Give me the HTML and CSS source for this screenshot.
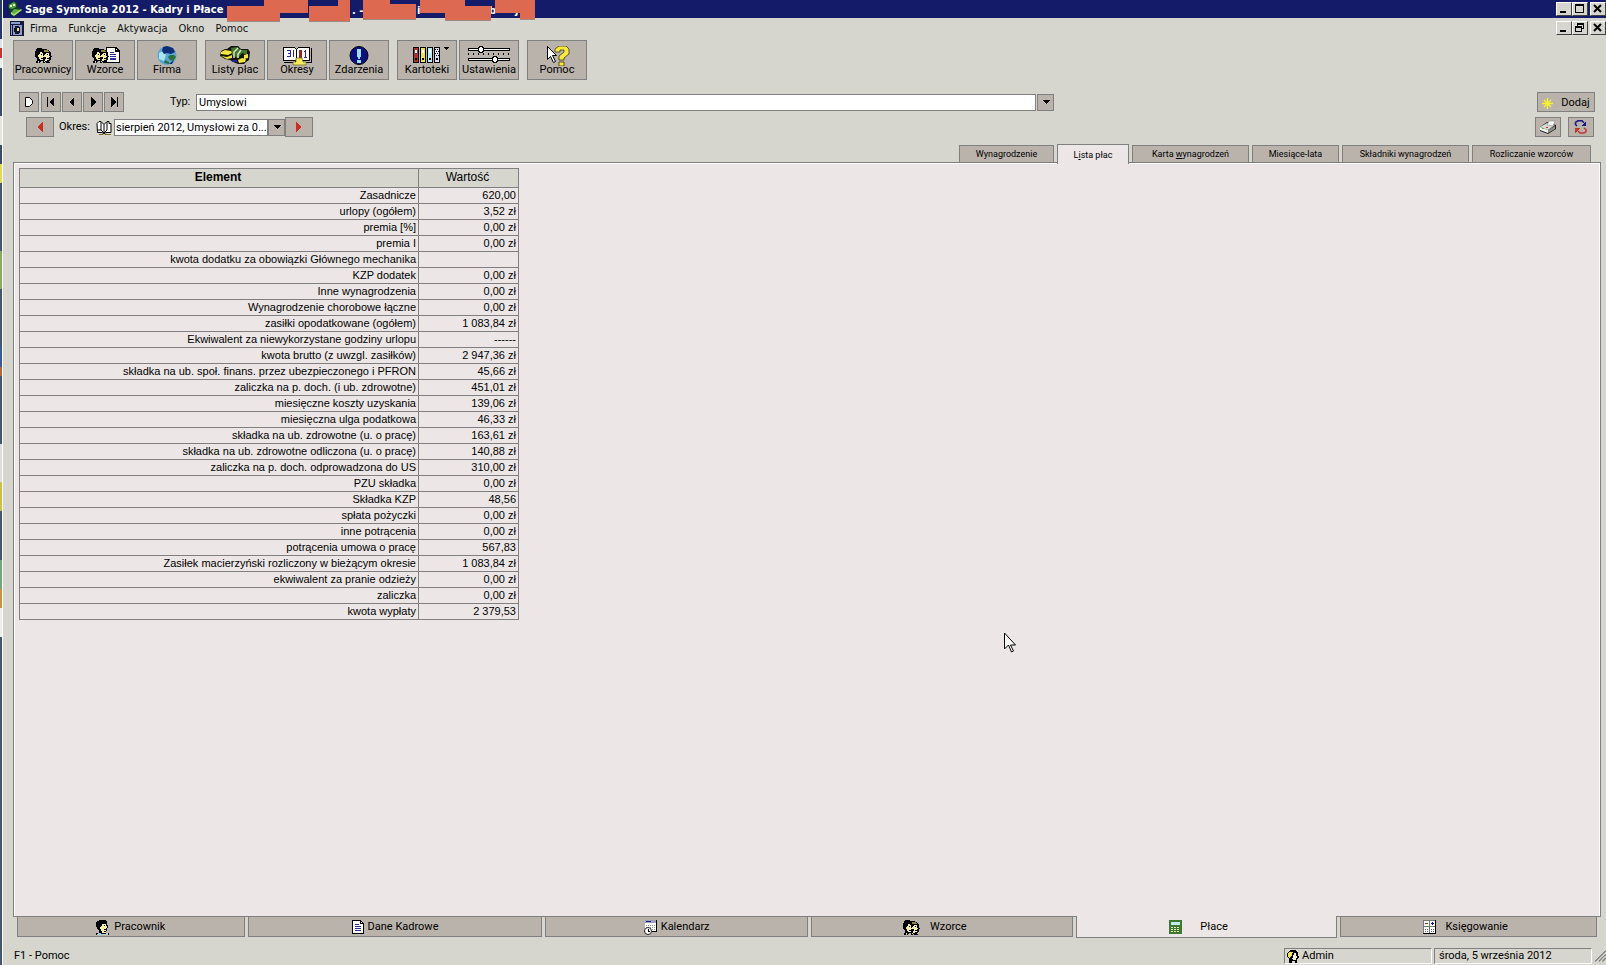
FILE: index.html
```html
<!DOCTYPE html>
<html lang="pl">
<head>
<meta charset="utf-8">
<title>Sage Symfonia 2012 - Kadry i Płace</title>
<link rel="stylesheet" href="styles.css">
</head>
<body>
<svg class="defs" aria-hidden="true">
  <symbol id="heads" viewBox="0 0 17 15">
    <path fill="#000" d="M2 0h5v1h5v1h2v1h1v1h1v4h1v1h-1v3h-1v1h-1v1h1v1h-4v-1h-1v1H8v-2H6v1H5v1H4v-1H3v1H1v-2h1v-3H1V9H0V3h1V1h1z"/>
    <path fill="#f3eda6" d="M5 4h2v1h1v3h1v1H8v3H5v-1H4V9H3V7h1V6h1zM11 5h3v3h1v1h-1v3h-2v1h-2v-2h1V9H9V7h1V6h1z"/>
    <path fill="#8d8338" d="M9 2h4v1h1v1H9z"/>
    <path fill="#000" d="M6 6h1v1H6zM12 6h1v1h-1zM6 10h2v1H6zM12 10h2v1h-2z"/>
    <path fill="#f3eda6" d="M3 13h1v1H3zM9 13h1v1H9z"/>
  </symbol>
  <symbol id="head" viewBox="0 0 14 15">
    <path fill="#000" d="M3 0h7v1h1v4h1v3h-1v3h-1v1H9v1h4v2H0v-2h3v-3H2V9H1V7H0V2h1V1h2z"/>
    <path fill="#f3eda0" d="M6 4h4v2h1v2h-1v3H8v1h2v1H6v-2H5V9H4V7h1V6h1z"/>
    <path fill="#000" d="M8 5h1v1H8zM8 9h2v1H8z"/><path fill="#9fd6d4" d="M2 13h3v1h5v-1h2v2H1v-1h1z"/>
  </symbol>
  <symbol id="page" viewBox="0 0 12 14">
    <path fill="#fff" stroke="#000" d="M.5.5h8l3 3v10H.5z"/><path fill="none" stroke="#000" d="M8.500.5v3h3"/>
    <path stroke="#2c2ca0" d="M3 4.500h4M3 6.500h6M3 8.500h6M3 10.500h6"/>
  </symbol>
</svg>
<div class="desktop">
<div class="backdrop"></div>
<div class="window">
  <header class="titlebar">
    <svg class="app-icon" viewBox="0 0 16 16"><path class="smooth" fill="#163f24" d="M1 3l6-3 3 2 1 4 4 3-8 7-4-3v-3L1 7z"/><path class="smooth" fill="#4ba545" d="M2 4l5-3 2 2v3L5 8 2 7z"/><path fill="#eef0c0" d="M3 4h2v2H3zM6 3h2v2H6z"/><path class="smooth" fill="#5fae46" d="M4 12l3-4 7 1-6 5z"/><path class="smooth" fill="#a5db70" d="M4 13l3 2 8-6-1-1-7 5-3-2z"/></svg>
    <h1>Sage Symfonia 2012 - Kadry i Płace</h1>
    <svg class="redaction" viewBox="0 0 312 24" aria-hidden="true">
      <text x="7" y="14">- TAW</text><text x="125" y="14">. -</text><text x="190" y="14">i</text><text x="262" y="14">b</text><text x="288" y="14">j</text>
      <path fill="#9c8a80" d="M0 21h53v1H0zM82 21h41v1H82zM136 19h53v1h-53zM218 20h46v1h-46zM293 19h15v1h-15z"/>
      <path fill="#dc6950" d="M0 6h37V0h44v13H53v8H0zM82 6h29V0h12v21H82zM136 0h27v4h26v15h-53zM193 0h45v6h26v14h-46v-7h-25zM268 0h40v19h-15v-6h-25z"/>
    </svg>
    <div class="controls">
      <button aria-label="Minimalizuj"><svg viewBox="0 0 12 10"><path stroke="#000" stroke-width="2" d="M2 8h6"/></svg></button><button aria-label="Maksymalizuj"><svg viewBox="0 0 12 10"><path fill="none" stroke="#000" d="M1.500.5h8v8h-8zM1 1.500h9"/></svg></button><button class="close" aria-label="Zamknij"><svg viewBox="0 0 12 10"><path class="smooth" fill="none" stroke="#000" stroke-width="2" d="M2 1l7 7M9 1L2 8"/></svg></button>
    </div>
  </header>
  <nav class="menubar">
    <svg class="doc-icon" viewBox="0 0 14 15"><path fill="#18183c" d="M0 0h14v15H0z"/><path fill="#8c9ccb" d="M1 1h9v2H1zM1 4h1v10H1z"/><path fill="#8c9ccb" d="M3 4h9v10H3z"/><path fill="#14142c" d="M5 5h4v1h1v6H9v1H5v-2H4V7h1z"/><path fill="#e9df80" d="M7 7h2v3H7z"/></svg>
    <a href="#">Firma</a><a href="#">Funkcje</a><a href="#">Aktywacja</a><a href="#">Okno</a><a href="#">Pomoc</a>
    <div class="controls">
      <button aria-label="Minimalizuj dokument"><svg viewBox="0 0 12 10"><path stroke="#000" stroke-width="2" d="M2 8h6"/></svg></button><button aria-label="Przywróć"><svg viewBox="0 0 12 10"><path fill="none" stroke="#000" d="M3.500 3V.5h6v5H8M3 1.500h7M1.500 3.500h6v5h-6zM1 4.500h7"/></svg></button><button class="close" aria-label="Zamknij dokument"><svg viewBox="0 0 12 10"><path class="smooth" fill="none" stroke="#000" stroke-width="2" d="M2 1l7 7M9 1L2 8"/></svg></button>
    </div>
  </nav>
  <div class="toolbar">
    <div class="group">
      <button><svg viewBox="0 0 44 20"><use href="#heads" x="14" y="2" width="17" height="15"/></svg>Pracownicy</button>
      <button><svg viewBox="0 0 44 20"><use href="#page" x="23" y="1" width="14" height="16"/><use href="#heads" x="9" y="2" width="17" height="15"/></svg>Wzorce</button>
      <button><svg viewBox="0 0 44 20"><circle class="smooth" cx="22" cy="9.500" r="9.500" fill="#5aa5d4"/><path class="smooth" fill="#a8e4ee" d="M14 7l4-2 3 4-2 6-5-2z"/><path class="smooth" fill="#102c74" d="M18 1l4-1 6 2 2 4-4 2-4-1-3 1-2-3zM24 18l5-4-2 4z"/><path class="smooth" fill="#28743c" d="M25 9l4 0 2 2-3 4-3-1-2-3zM20 14l4 2v2l-5-1z"/></svg>Firma</button>
    </div>
    <div class="group">
      <button><svg viewBox="0 0 44 20"><path class="smooth" fill="#141408" d="M14 3l4-3h7l3 3h7l2 3-1 8-3 2-2 2h-6l-5-2-3-2-5-1-5-3 1-5 4-2z"/><path class="smooth" fill="#3e762f" d="M18 2l6-1 4 3h6v5l-5-2-4 5-6-3z"/><path class="smooth" fill="none" stroke="#dde7ba" stroke-width="1.500" d="M25 2l-4 4v6M28 4l-3 4v4"/><path class="smooth" fill="#f4e640" d="M8 6l4-2 6 1 1 2-4 2-7-1zM8 10l6 1 5-2v3l-5 1zM25 14l4-2 4 1-1 3-6 1zM31 9l4-1v4l-4 1z"/><path fill="#182a85" d="M19 14h5v2h-5z"/></svg>Listy płac</button>
      <button><svg viewBox="0 0 44 20"><path fill="#fff" stroke="#000" d="M8.500 1.500h11l2 2 2-2h11v13h-11l-2 1-2-1h-11z"/><path stroke="#000" d="M21.500 3v12"/><path fill="none" stroke="#000" d="M36.500 2v14.500H24M9 16.500h11"/><path fill="none" stroke="#282898" d="M12 4.500h3.500v6H12M13 7.500h2M18.500 4v7M30.500 4v7M29 5.500h1M29 11h3"/><path fill="#922a20" d="M24 4h3v9h-3z"/><path class="smooth" fill="#f6e95a" stroke="#5d510f" stroke-width=".6" d="M21 12h6l1 4h3v3H18v-3h3z"/></svg>Okresy</button>
      <button><svg viewBox="0 0 44 20"><circle class="smooth" cx="22" cy="9.500" r="9" fill="#0a0f80" stroke="#000"/><path fill="#9cdcf4" d="M20 3h4v8h-1v2h-2v-2h-1zM20 14h4v3h-4z"/></svg>Zdarzenia</button>
    </div>
    <div class="group">
      <button><svg viewBox="0 0 44 20"><path d="M8 1h6v16H8zM15 1h6v16h-6zM22 1h6v16h-6zM29 1h6v16h-6zM39 1h5v1h-1v1h-1v1h-1V3h-1V2h-1z"/><path fill="#a8342b" d="M9 2h4v14H9z"/><path fill="#f4df4c" d="M16 2h4v14h-4z"/><path fill="#b9eef4" d="M23 2h4v14h-4z"/><path fill="#dce0f4" d="M30 2h4v14h-4z"/><path fill="#fff" d="M10 4h2v3h-2zM17 4h2v3h-2zM24 4h2v3h-2z"/><path d="M10 12h2v2h-2zM17 12h2v2h-2zM24 12h2v2h-2zM31 12h2v2h-2zM30 3h1v1h-1zM32 3h1v1h-1zM31 5h1v1h-1zM33 5h1v1h-1zM30 7h1v1h-1zM32 7h1v1h-1zM31 9h1v1h-1zM33 9h1v1h-1z"/></svg>Kartoteki</button>
      <button><svg viewBox="0 0 44 20"><path d="M1 2h42v3H1zM1 12h42v3H1z"/><path fill="#fff" d="M2 3h40v1H2zM2 13h40v1H2zM12 1h4v5h-4zM26 11h4v5h-4z"/><path stroke="#000" stroke-dasharray="1 4" stroke-width="2" d="M1 8h42"/><path fill="none" stroke="#000" d="M12.500.5h3v1h1v4h-1v1h-3v-1h-1v-4h1zM26.500 10.500h3v1h1v4h-1v1h-3v-1h-1v-4h1z"/></svg>Ustawienia</button>
    </div>
    <div class="group">
      <button><svg viewBox="0 0 44 20"><path class="smooth" fill="#f8e840" stroke="#3d390c" stroke-width=".8" d="M20 6V3l4-3h7l3 3v5l-5 4v2h-5v-4l5-4V4h-4v2zM24 16h5v4h-5z"/><path class="smooth" fill="#fff" stroke="#000" d="M12.500.5v13l3-3 3 6 2-1-3-6h4z"/></svg>Pomoc</button>
    </div>
  </div>
  <div class="filters">
    <div class="row nav-row">
      <button class="small first" aria-label="Znacznik"><svg viewBox="0 0 12 12"><path class="smooth" fill="#fff" stroke="#000" d="M2.500 1.500h4l3 3v3l-3 3h-4z"/></svg></button>
      <button class="small" aria-label="Pierwszy"><svg viewBox="0 0 12 12"><path d="M2 1h1v10H2zM4 6l5-5v10z"/></svg></button>
      <button class="small" aria-label="Poprzedni"><svg viewBox="0 0 12 12"><path d="M3 6l5-5v10z"/></svg></button>
      <button class="small" aria-label="Następny"><svg viewBox="0 0 12 12"><path d="M4 1l5 5-5 5z"/></svg></button>
      <button class="small" aria-label="Ostatni"><svg viewBox="0 0 12 12"><path d="M3 1l5 5-5 5zM9 1h1v10H9z"/></svg></button>
      <label class="type-label" for="typ">Typ:</label>
      <select id="typ" class="type"><option>Umyslowi</option></select>
      <button class="drop" aria-label="Rozwiń typ"><svg viewBox="0 0 8 4"><path d="M0 0h8L4 4z"/></svg></button>
      <span class="space"></span>
      <button class="add"><svg viewBox="0 0 11 11"><path class="smooth" fill="none" stroke="#f8f228" stroke-width="1.300" d="M5.500 0v11M0 5.500h11M2 2l7 7M9 2L2 9"/></svg>Dodaj</button>
    </div>
    <div class="row period-row">
      <button class="red" aria-label="Poprzedni okres"><svg viewBox="0 0 6 10"><path fill="#c92e22" d="M6 0v10L0 5z"/></svg></button>
      <label class="period-label" for="okres">Okres:</label>
      <svg class="book" viewBox="0 0 16 15"><path class="smooth" fill="#fff" stroke="#000" d="M1 3.500L3 1.500h2l3 3 3-3h2v2h2v9h-5l-2 1.500-2-1.500H1.500z"/><path class="smooth" fill="none" stroke="#000" d="M8 4.500v9M5 2v8l3 3 3-3V2M5 10H2"/><path stroke="#77702a" d="M3 14h4M9 14h6"/></svg>
      <select id="okres" class="period"><option>sierpień 2012, Umysłowi za 0...</option></select>
      <button class="drop" aria-label="Rozwiń okres"><svg viewBox="0 0 8 4"><path d="M0 0h8L4 4z"/></svg></button>
      <button class="red" aria-label="Następny okres"><svg viewBox="0 0 6 10"><path fill="#c92e22" d="M0 0v10l6-5z"/></svg></button>
      <span class="space"></span>
      <button class="tool" aria-label="Drukuj"><svg viewBox="0 0 16 14"><path class="smooth" fill="#222" d="M0 7l7-5 9 3v4l-8 5-8-3z"/><path class="smooth" fill="#d9dad7" d="M0 7l7-4 8 2-7 5z"/><path class="smooth" fill="#fff" stroke="#777" stroke-width=".5" d="M7 5l2-4h6l-2 5z"/><path class="smooth" fill="#f1f1f0" d="M0 7l8 3v3l-8-3z"/><path class="smooth" fill="#8c8e8a" d="M8 10l7-4v3l-7 4z"/><path fill="#63b03c" d="M2 8h2v1H2z"/><path fill="#ca2e24" d="M6 7h2v1H6z"/></svg></button>
      <button class="tool" aria-label="Odśwież"><svg viewBox="0 0 14 14"><path class="smooth" fill="none" stroke="#18187c" stroke-width="1.500" d="M3 6L1.500 4.500V2.500L4 .8h4l2 2"/><path fill="#18187c" d="M12 1v5H7z"/><path class="smooth" fill="none" stroke="#bf382d" stroke-width="1.500" d="M10 8l2 1.500v2L10 13H6l-2-2"/><path fill="#bf382d" d="M1 13V8h5z"/></svg></button>
    </div>
  </div>
  <div class="tabs top-tabs">
    <button class="t1">Wynagrodzenie</button><button class="t2 active">L<u>i</u>sta płac</button><button class="t3">Karta <u>w</u>ynagrodzeń</button><button class="t4">Miesiące-lata</button><button class="t5">Składniki wynagrodzeń</button><button class="t6">Rozliczanie wzorców</button>
  </div>
  <main class="panel">
    <table>
      <thead><tr><th class="name" scope="col">Element</th><th class="value" scope="col">Wartość</th></tr></thead>
      <tbody>
        <tr><td>Zasadnicze</td><td>620,00</td></tr>
        <tr><td>urlopy (ogółem)</td><td>3,52 zł</td></tr>
        <tr><td>premia [%]</td><td>0,00 zł</td></tr>
        <tr><td>premia I</td><td>0,00 zł</td></tr>
        <tr><td>kwota dodatku za obowiązki Głównego mechanika</td><td></td></tr>
        <tr><td>KZP dodatek</td><td>0,00 zł</td></tr>
        <tr><td>Inne wynagrodzenia</td><td>0,00 zł</td></tr>
        <tr><td>Wynagrodzenie chorobowe łączne</td><td>0,00 zł</td></tr>
        <tr><td>zasiłki opodatkowane (ogółem)</td><td>1 083,84 zł</td></tr>
        <tr><td>Ekwiwalent za niewykorzystane godziny urlopu</td><td>------</td></tr>
        <tr><td>kwota brutto (z uwzgl. zasiłków)</td><td>2 947,36 zł</td></tr>
        <tr><td>składka na ub. społ. finans. przez ubezpieczonego i PFRON</td><td>45,66 zł</td></tr>
        <tr><td>zaliczka na p. doch. (i ub. zdrowotne)</td><td>451,01 zł</td></tr>
        <tr><td>miesięczne koszty uzyskania</td><td>139,06 zł</td></tr>
        <tr><td>miesięczna ulga podatkowa</td><td>46,33 zł</td></tr>
        <tr><td>składka na ub. zdrowotne (u. o pracę)</td><td>163,61 zł</td></tr>
        <tr><td>składka na ub. zdrowotne odliczona (u. o pracę)</td><td>140,88 zł</td></tr>
        <tr><td>zaliczka na p. doch. odprowadzona do US</td><td>310,00 zł</td></tr>
        <tr><td>PZU składka</td><td>0,00 zł</td></tr>
        <tr><td>Składka KZP</td><td>48,56</td></tr>
        <tr><td>spłata pożyczki</td><td>0,00 zł</td></tr>
        <tr><td>inne potrącenia</td><td>0,00 zł</td></tr>
        <tr><td>potrącenia umowa o pracę</td><td>567,83</td></tr>
        <tr><td>Zasiłek macierzyński rozliczony w bieżącym okresie</td><td>1 083,84 zł</td></tr>
        <tr><td>ekwiwalent za pranie odzieży</td><td>0,00 zł</td></tr>
        <tr><td>zaliczka</td><td>0,00 zł</td></tr>
        <tr><td>kwota wypłaty</td><td>2 379,53</td></tr>
      </tbody>
    </table>
  </main>
  <div class="tabs bottom-tabs">
    <button><svg width="14" height="15"><use href="#head"/></svg>Pracownik</button>
    <button><svg width="12" height="14"><use href="#page"/></svg>Dane Kadrowe</button>
    <button><svg width="13" height="15" viewBox="0 0 13 15"><path fill="#fff" d="M1 0h11v12H1z"/><path fill="#9da2bd" d="M1 0h11v3H1z"/><path fill="#1a1a7c" d="M2 1h5v1H2z"/><path stroke="#999" stroke-dasharray="1 1" d="M2 5.500h9M2 7.500h9M2 9.500h9"/><path d="M12 0h1v12H8v-1h4z"/><circle class="smooth" cx="4" cy="11" r="3.500" fill="#fff" stroke="#222"/><path fill="none" stroke="#000" d="M4.500 9v2.500H6"/></svg>Kalendarz</button>
    <button class="patterns"><svg width="17" height="15"><use href="#heads"/></svg>Wzorce</button>
    <button class="pay active"><svg width="13" height="14" viewBox="0 0 13 14"><path fill="#407734" d="M0 0h13v14H0z"/><path fill="#c4ecf0" d="M2 2h9v3H2z"/><path stroke="#dff0a8" stroke-dasharray="2 1" d="M2 7.500h9M2 9.500h9M2 11.500h9"/></svg>Płace</button>
    <button class="ledger"><svg width="13" height="14" viewBox="0 0 13 14"><path fill="#fff" stroke="#777" d="M.5.5h12v13H.5zM6.500 0v14M0 6.500h13"/><path stroke="#a22" d="M2 3.500h3"/><path stroke="#119" d="M8 3.500h3M9.500 2v3"/><path stroke="#555" stroke-dasharray="1 1" d="M2 9.500h4M2 11.500h4M8 9.500h4M8 11.500h4"/><path d="M12 0h1v14H0v-1h12z"/></svg>Księgowanie</button>
  </div>
  <footer class="status">
    <span class="hint">F1 - Pomoc</span>
    <span class="cell user"><svg width="12" height="13" viewBox="0 0 12 13"><path d="M3 0h6l2 3 1 5-2 1v4H8v-2H5v2H2V9L0 7V3z"/><path fill="#f0e65c" d="M2 2h4L5 5 3 8 1 7V4z"/><path fill="#f3f1d8" d="M7 3h2v3h1v2H9v2H6l-1-1 1-2z"/></svg>Admin</span>
    <span class="cell date">środa, 5 września 2012</span>
    <svg class="grip" viewBox="0 0 13 13"><path class="smooth" fill="none" stroke="#fff" d="M0 13L13 0M4 13l9-9M8 13l5-5"/><path class="smooth" fill="none" stroke="#808080" stroke-width="1.500" d="M1 13L13 1M5 13l8-8M9 13l4-4"/></svg>
  </footer>
  <svg class="pointer" viewBox="0 0 12 21" aria-hidden="true"><path class="smooth" fill="#fff" stroke="#000" d="M.5 1v16l4-4 3 7 2-1-3-6h5z"/></svg>
</div>
</div>
</body>
</html>
```
FILE: styles.css
```css
* { box-sizing: border-box; }
body {
  margin: 0;
  font: 11px/14px Roboto, "Liberation Sans", Arial, sans-serif;
  color: #000;
  background: #d6d6ce;
}
button, select { font: inherit; color: inherit; margin: 0; padding: 0; border-radius: 0; }
button, option, label { white-space: nowrap; }
svg { flex: none; shape-rendering: crispEdges; }
.smooth { shape-rendering: auto; }
.defs { position: absolute; width: 0; height: 0; }

.desktop { display: grid; grid-template-columns: 2px minmax(0, 1fr); min-height: 100vh; }
.backdrop {
  background: linear-gradient(#26386a 0 4%, #dfe4e8 4% 5%, #c33 5% 6%, #eee 6% 7%, #3a4c66 7% 12%, #e6e6dd 12% 15%, #3a4c66 15% 17%, #e2d95a 17% 19%, #42586f 19% 26%, #87ab60 26% 30%, #42586f 30% 36%, #3a5c92 36% 38%, #b06a3a 38% 39%, #42586f 39% 46%, #ddd 46% 50%, #cdbf49 50% 53%, #42586f 53% 58%, #74a479 58% 61%, #c79243 61% 63%, #eee 63% 66%, #42586f 66%);
}
.window { position: relative; display: flex; flex-direction: column; border-left: 1px solid #fff; }

.titlebar { position: relative; display: flex; align-items: center; height: 18px; padding-left: 4px; background: #141b69; color: #fff; }
.titlebar h1 { margin: 0 0 0 2px; font: bold 11px/16px "DejaVu Sans Condensed", Tahoma, sans-serif; padding-top: 2px; white-space: nowrap; }
.app-icon { width: 16px; height: 16px; }
.redaction { position: absolute; left: 224px; top: 0; width: 312px; height: 24px; }
.redaction text { fill: #fff; font: bold 11px "DejaVu Sans Condensed", Tahoma, sans-serif; }

.controls { display: flex; margin-left: auto; }
.controls button { display: flex; width: 16px; height: 14px; padding: 1px; background: #d6d6ce; border: 1px solid; border-color: #fff #404040 #404040 #fff; }
.controls svg { width: 12px; height: 10px; }
.controls .close { margin-left: 2px; }

.menubar { display: flex; align-items: center; height: 20px; padding-left: 7px; }
.doc-icon { width: 14px; height: 15px; }
.menubar a { color: #111; text-decoration: none; font: 11px/18px "DejaVu Sans Condensed", Tahoma, sans-serif; padding-top: 2px; margin-left: 11px; }
.menubar .doc-icon + a { margin-left: 6px; }

.toolbar { display: flex; gap: 8px; padding: 2px 10px 0; }
.group { display: flex; gap: 2px; }
.toolbar button, .filters button { background: #bab3ac; border: 1px solid #808080; }
.toolbar button { display: flex; flex-direction: column; align-items: center; width: 60px; height: 40px; padding-top: 5px; line-height: 12px; }
.toolbar svg { width: 44px; height: 20px; margin-bottom: -2px; }

.filters { display: flex; flex-direction: column; gap: 5px; padding: 12px 11px 0 16px; }
.row { display: flex; align-items: center; height: 20px; }
.filters button { display: flex; align-items: center; justify-content: center; flex: none; height: 20px; }
.small { width: 20px; margin-right: 1px; }
.small.first { margin-right: 2px; }
.small svg { width: 12px; height: 12px; }
.type-label { width: 26px; margin-left: 45px; }
.filters select { appearance: none; height: 17px; padding-left: 2px; background: #fff; border: 1px solid #808080; line-height: 15px; }
.type { flex: 840 1 0; min-width: 0; }
.nav-row .space { flex: 485 1 0; }
.filters .drop { width: 17px; height: 17px; margin-left: 1px; }
.drop svg { width: 8px; height: 4px; }
.filters .add { width: 58px; gap: 8px; padding-top: 2px; }
.add svg { width: 11px; height: 11px; }
.period-row { padding: 0 1px 0 7px; }
.period-row .space { flex: 1; }
.red { width: 28px; }
.red svg { width: 6px; height: 10px; }
.period-label { width: 37px; margin-left: 5px; }
.book { width: 16px; height: 15px; margin-right: 2px; }
.period { width: 154px; }
.filters .period { padding-left: 1px; }
.period-row .drop { margin-left: 0; }
.tool { width: 26px; }
.tool + .tool { margin-left: 7px; }
.tool svg { width: 16px; height: 14px; }

.tabs { position: relative; z-index: 1; gap: 3px; }
.tabs button { background: #bab3ac; border: 1px solid #808080; }
.top-tabs { display: flex; justify-content: flex-end; align-items: flex-end; height: 20px; margin: 6px 0 -1px; padding: 0 15px 0 10px; font-size: 9px; }
.top-tabs button { height: 18px; line-height: 14px; }
.top-tabs .active { height: 20px; margin-bottom: -1px; border-bottom: 0; }
.tabs .active { background: #ece7e6; }
.t1 { width: 95px; }
.t2 { width: 72px; }
.t3 { width: 117px; }
.t4 { width: 87px; }
.t5 { width: 127px; }
.t6 { width: 119px; }

.panel { flex: 1; margin: 0 5px 0 10px; padding: 5px; border: 1px solid #808080; background: #ece7e6; box-shadow: inset 1px 1px #fff, inset -1px 0 #fff; }
table { border-collapse: collapse; table-layout: fixed; width: 500px; font-family: "Liberation Sans", Arial, sans-serif; line-height: 13px; }
th, td { border: 1px solid #808080; padding: 1px 2px; }
td { height: 16px; text-align: right; }
th { height: 19px; padding: 0 4px 2px 2px; background: #d6d6ce; font-size: 12px; }
.name { width: 399px; }
.value { font-weight: normal; }

.bottom-tabs {
  display: grid;
  grid-template-columns: minmax(0, 228fr) minmax(0, 295fr) minmax(0, 263fr) minmax(0, 262fr) minmax(0, 262fr) minmax(0, 257fr);
  align-items: start;
  height: 22px;
  margin: -1px 9px 0 14px;
}
.bottom-tabs button { display: flex; align-items: center; justify-content: center; gap: 4px; height: 21px; padding-top: 1px; }
.bottom-tabs .active { height: 22px; border-top: 0; }
.bottom-tabs .patterns { gap: 10px; padding-right: 14px; }
.bottom-tabs .pay { gap: 18px; padding-right: 16px; }
.bottom-tabs .ledger { gap: 9px; padding-right: 6px; }

.status { display: flex; align-items: center; height: 27px; padding: 9px 0 1px 11px; }
.hint { flex: 1; padding-top: 1px; }
.cell { display: flex; align-items: center; gap: 3px; height: 16px; margin-right: 2px; padding: 1px 0 0 2px; border: 1px solid; border-color: #808080 #fff #fff #808080; }
.user { width: 148px; }
.date { width: 158px; padding-left: 4px; }
.grip { width: 12px; height: 13px; }
.pointer { position: absolute; left: 1001px; top: 632px; width: 12px; height: 21px; }
```
